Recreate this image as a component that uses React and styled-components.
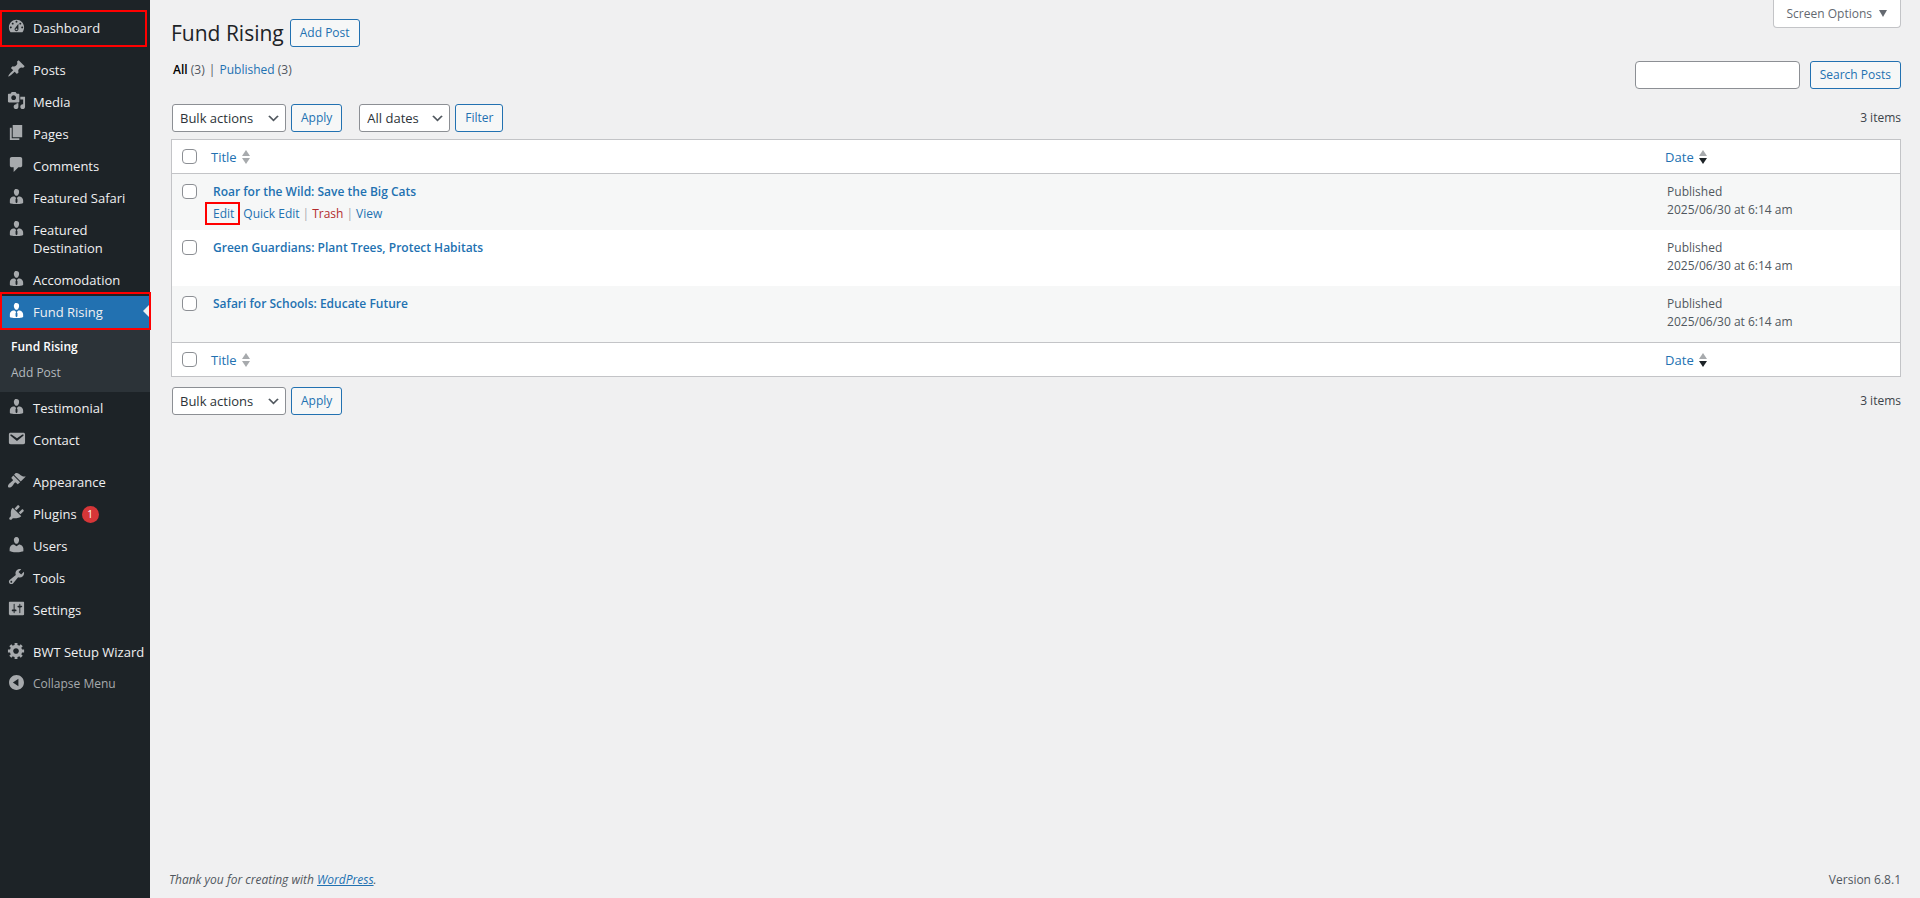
import React from 'react';
import styled, { createGlobalStyle, css } from 'styled-components';

const GlobalStyle = createGlobalStyle`
  * {
    box-sizing: border-box;
  }
  body {
    margin: 0;
    background: #f0f0f1;
    color: #3c434a;
    font-family: 'Segoe UI', 'Open Sans', 'Noto Sans', sans-serif;
    font-size: 12px;
    line-height: 18px;
  }
  a {
    color: #2271b1;
    text-decoration: none;
  }
  button, input, select {
    font-family: inherit;
  }
`;

const businessman =
  'M7.3 6l-.03-.19c-.04-.37-.05-.73-.03-1.08.02-.36.1-.71.25-1.04.14-.32.31-.61.52-.86s.49-.46.83-.6c.34-.15.72-.23 1.13-.23.69 0 1.26.2 1.71.59s.76.87.91 1.44.18 1.16.09 1.78l-.03.19c-.01.09-.05.25-.11.48-.05.24-.12.47-.2.69-.08.21-.19.45-.34.72-.14.27-.3.49-.47.69-.18.19-.4.34-.67.48-.27.13-.55.19-.86.19s-.59-.06-.87-.19c-.26-.13-.49-.29-.67-.5-.18-.2-.34-.42-.49-.66-.15-.25-.26-.49-.34-.73-.09-.25-.16-.47-.21-.67-.06-.21-.1-.37-.12-.5zm9.2 6.24c.41.7.5 1.41.5 2.14v2.49c0 .03-.12.08-.29.13-.18.04-.42.13-.97.27-.55.12-1.1.24-1.65.34s-1.19.19-1.95.27c-.75.08-1.46.12-2.13.12-.68 0-1.39-.04-2.14-.12-.75-.07-1.4-.17-1.98-.27-.58-.11-1.08-.23-1.56-.34-.49-.11-.8-.21-1.06-.29L3 16.87v-2.49c0-.75.07-1.46.46-2.15s.81-1.25 1.5-1.68C5.66 10.12 7.19 10 8 10l1.67 1.67L9 13v3l1.02 1.08L11 16v-3l-.68-1.33L11.97 10c.77 0 2.2.07 2.9.52.71.45 1.21 1.02 1.63 1.72z';

const icons = {
  dashboard:
    'M3.76 16h12.48c1.1-1.37 1.76-3.11 1.76-5 0-4.42-3.58-8-8-8s-8 3.58-8 8c0 1.89.66 3.63 1.76 5zM10 4c.55 0 1 .45 1 1s-.45 1-1 1-1-.45-1-1 .45-1 1-1zM6 6c.55 0 1 .45 1 1s-.45 1-1 1-1-.45-1-1 .45-1 1-1zm8 0c.55 0 1 .45 1 1s-.45 1-1 1-1-.45-1-1 .45-1 1-1zm-5.37 5.55L12 7v6c0 1.1-.9 2-2 2s-2-.9-2-2c0-.57.24-1.08.63-1.45zM4 10c.55 0 1 .45 1 1s-.45 1-1 1-1-.45-1-1 .45-1 1-1zm12 0c.55 0 1 .45 1 1s-.45 1-1 1-1-.45-1-1 .45-1 1-1zm-5 3c0-.55-.45-1-1-1s-1 .45-1 1 .45 1 1 1 1-.45 1-1z',
  post: 'M10.44 3.02l1.82-1.82 6.36 6.35-1.83 1.82c-1.05-.68-2.48-.57-3.41.36l-.75.75c-.92.93-1.04 2.35-.35 3.41l-1.83 1.82-2.41-2.41-2.8 2.79c-.42.42-3.38 2.71-3.8 2.29s1.86-3.39 2.28-3.81l2.79-2.79L4.1 9.36l1.83-1.82c1.05.69 2.48.57 3.4-.36l.75-.75c.93-.92 1.05-2.35.36-3.41z',
  media:
    'M13 11V4c0-.55-.45-1-1-1h-1.67L9 1H5L3.67 3H2c-.55 0-1 .45-1 1v7c0 .55.45 1 1 1h10c.55 0 1-.45 1-1zM7 4.5c1.38 0 2.5 1.12 2.5 2.5S8.38 9.5 7 9.5 4.5 8.38 4.5 7 5.62 4.5 7 4.5zM14 6h5v10.5c0 1.38-1.12 2.5-2.5 2.5S14 17.88 14 16.5s1.12-2.5 2.5-2.5c.17 0 .34.02.5.05V9h-3V6zm-4 8.05V13h2v3.5c0 1.38-1.12 2.5-2.5 2.5S7 17.88 7 16.5 8.12 14 9.5 14c.17 0 .34.02.5.05z',
  page: 'M6 15V2h10v13H6zm-1 1h8v2H3V5h2v11z',
  comments: 'M5 2h9c1.1 0 2 .9 2 2v7c0 1.1-.9 2-2 2h-2l-5 5v-5H5c-1.1 0-2-.9-2-2V4c0-1.1.9-2 2-2z',
  businessman,
  email:
    'M3.87 4h13.25C18.37 4 19 4.59 19 5.79v8.42c0 1.19-.63 1.79-1.88 1.79H3.87c-1.25 0-1.88-.6-1.88-1.79V5.79c0-1.2.63-1.79 1.88-1.79zm6.62 8.6l6.74-5.53c.24-.2.43-.66.13-1.07-.29-.41-.82-.42-1.17-.17l-5.7 3.86L4.8 5.83c-.35-.25-.88-.24-1.17.17-.3.41-.11.87.13 1.07z',
  appearance:
    'M14.48 11.06L7.41 3.99l1.5-1.5c.5-.56 2.3-.47 3.51.32 1.21.8 1.43 1.28 2.91 2.1 1.18.64 2.45 1.26 4.45.85zm-.71.71L6.7 4.7 4.93 6.47c-.39.39-.39 1.02 0 1.41l1.06 1.06c.39.39.39 1.03 0 1.42-.6.6-1.43 1.11-2.21 1.69-.35.26-.7.53-1.01.84C1.43 14.23.4 16.08 1.4 17.07c.99 1 2.84-.03 4.18-1.36.31-.31.58-.66.85-1.02.57-.78 1.08-1.61 1.69-2.21.39-.39 1.02-.39 1.41 0l1.06 1.06c.39.39 1.02.39 1.41 0z',
  plugins:
    'M13.11 4.36L9.87 7.6 8 5.73l3.24-3.24c.35-.34 1.05-.2 1.56.32.52.51.66 1.21.31 1.55zm-8 1.77l.91-1.12 9.01 9.01-1.19.84c-.71.71-2.63 1.16-3.82 1.16H6.14L4.9 17.26c-.59.59-1.54.59-2.12 0-.59-.58-.59-1.53 0-2.12l1.24-1.24v-3.88c0-1.13.4-3.19 1.09-3.89zm7.26 3.97l3.24-3.24c.34-.35 1.04-.21 1.55.31.52.51.66 1.21.31 1.55l-3.24 3.25z',
  users:
    'M10 9.25c-2.27 0-2.73-3.44-2.73-3.44C7 4.02 7.82 2 9.97 2c2.16 0 2.98 2.02 2.71 3.81 0 0-.41 3.44-2.68 3.44zm0 2.57L12.72 10c2.39 0 4.52 2.33 4.52 4.53v2.49s-3.65 1.13-7.24 1.13c-3.65 0-7.24-1.13-7.24-1.13v-2.49c0-2.25 1.94-4.48 4.47-4.48z',
  tools:
    'M16.68 9.77c-1.34 1.34-3.3 1.67-4.95.99l-5.41 6.52c-.99.99-2.59.99-3.58 0s-.99-2.59 0-3.57l6.52-5.42c-.68-1.65-.35-3.61.99-4.95 1.28-1.28 3.12-1.62 4.72-1.06l-2.89 2.89 2.82 2.82 2.86-2.87c.53 1.58.18 3.39-1.08 4.65zM3.81 16.21c.4.39 1.04.39 1.43 0 .4-.4.4-1.04 0-1.43-.39-.4-1.03-.4-1.43 0-.39.39-.39 1.03 0 1.43z',
  settings:
    'M18 16V4c0-.55-.45-1-1-1H3c-.55 0-1 .45-1 1v12c0 .55.45 1 1 1h14c.55 0 1-.45 1-1zM8 11h1c.55 0 1 .45 1 1s-.45 1-1 1H8v1.5c0 .28-.22.5-.5.5s-.5-.22-.5-.5V13H6c-.55 0-1-.45-1-1s.45-1 1-1h1V5.5c0-.28.22-.5.5-.5s.5.22.5.5V11zm5-2h-1c-.55 0-1-.45-1-1s.45-1 1-1h1V5.5c0-.28.22-.5.5-.5s.5.22.5.5V7h1c.55 0 1 .45 1 1s-.45 1-1 1h-1v5.5c0 .28-.22.5-.5.5s-.5-.22-.5-.5V9z',
  generic:
    'M18 12h-2.18c-.17.7-.44 1.35-.81 1.93l1.54 1.54-2.1 2.1-1.54-1.54c-.58.36-1.23.63-1.91.79V19H8v-2.18c-.68-.16-1.33-.43-1.91-.79l-1.54 1.54-2.12-2.12 1.54-1.54c-.36-.58-.63-1.23-.79-1.91H1V9.03h2.17c.16-.7.44-1.35.8-1.94L2.43 5.55l2.1-2.1 1.54 1.54c.58-.37 1.24-.64 1.93-.81V2h3v2.18c.68.16 1.33.43 1.91.79l1.54-1.54 2.12 2.12-1.54 1.54c.36.59.64 1.24.8 1.94H18V12zm-8.5 1.5c1.66 0 3-1.34 3-3s-1.34-3-3-3-3 1.34-3 3 1.34 3 3 3z',
  collapse:
    'M10 2.16c4.33 0 7.84 3.51 7.84 7.84s-3.51 7.84-7.84 7.84S2.16 14.33 2.16 10 5.71 2.16 10 2.16zm2 11.72V6.12L6.18 9.97z'
};

// each group is followed by a blank separator
const menuGroups = [
  [{ icon: 'dashboard', label: 'Dashboard', marked: true }],
  [
    { icon: 'post', label: 'Posts' },
    { icon: 'media', label: 'Media' },
    { icon: 'page', label: 'Pages' },
    { icon: 'comments', label: 'Comments' },
    { icon: 'businessman', label: 'Featured Safari' },
    { icon: 'businessman', label: 'Featured Destination' },
    { icon: 'businessman', label: 'Accomodation' },
    { icon: 'businessman', label: 'Fund Rising', active: true, marked: true, children: ['Fund Rising', 'Add Post'] },
    { icon: 'businessman', label: 'Testimonial' },
    { icon: 'email', label: 'Contact' }
  ],
  [
    { icon: 'appearance', label: 'Appearance' },
    { icon: 'plugins', label: 'Plugins', count: 1 },
    { icon: 'users', label: 'Users' },
    { icon: 'tools', label: 'Tools' },
    { icon: 'settings', label: 'Settings' }
  ],
  [{ icon: 'generic', label: 'BWT Setup Wizard' }]
];

const posts = [
  { id: 1, title: 'Roar for the Wild: Save the Big Cats', date: '2025/06/30 at 6:14 am', showActions: true },
  { id: 2, title: 'Green Guardians: Plant Trees, Protect Habitats', date: '2025/06/30 at 6:14 am' },
  { id: 3, title: 'Safari for Schools: Educate Future', date: '2025/06/30 at 6:14 am' }
];

const MenuItem = ({ item }) => (
  <li>
    <MenuLink href="#" $active={item.active}>
      <MenuIcon viewBox="0 0 20 20" aria-hidden="true">
        <path d={icons[item.icon]} />
      </MenuIcon>
      <MenuLabel>
        {item.label}
        {item.count && <Count>{item.count}</Count>}
      </MenuLabel>
      {item.active && <Arrow />}
      {item.marked && <MenuMark $wide={item.active} />}
    </MenuLink>
    {item.children && (
      <SubMenu>
        {item.children.map((child, idx) => (
          <li key={child}>
            <SubLink href="#" $current={idx === 0}>
              {child}
            </SubLink>
          </li>
        ))}
      </SubMenu>
    )}
  </li>
);

const Select = ({ label, options, wide }) => (
  <SelectWrap $wide={wide}>
    <StyledSelect aria-label={label}>
      {options.map(option => (
        <option key={option}>{option}</option>
      ))}
    </StyledSelect>
    <Chevron viewBox="0 0 20 20" aria-hidden="true">
      <path d="M5 6l5 5 5-5 2 1-7 7-7-7 2-1z" />
    </Chevron>
  </SelectWrap>
);

const SortLink = ({ label, desc }) => (
  <Sort href="#">
    {label}
    <SortIcon viewBox="0 0 8 14" aria-hidden="true">
      <path d="M4 0l4 6H0z" fill="#a7aaad" />
      <path d="M0 8h8l-4 6z" fill={desc ? '#1d2327' : '#a7aaad'} />
    </SortIcon>
  </Sort>
);

const HeadRow = ({ name }) => (
  <tr>
    <CheckHead>
      <Checkbox aria-label={`Select all, ${name}`} />
    </CheckHead>
    <Head scope="col">
      <SortLink label="Title" />
    </Head>
    <DateHead scope="col">
      <SortLink label="Date" desc />
    </DateHead>
  </tr>
);

const BulkActions = () => (
  <Group>
    <Select wide label="Select bulk action" options={['Bulk actions', 'Edit', 'Move to Trash']} />
    <Button type="button">Apply</Button>
  </Group>
);

const App = () => {
  return (
    <>
      <GlobalStyle />
      <Page>
        <Sidebar>
          {menuGroups.map((group, idx) => (
            <Menu key={idx}>
              {group.map(item => (
                <MenuItem key={item.label} item={item} />
              ))}
            </Menu>
          ))}
          <CollapseButton type="button">
            <MenuIcon viewBox="0 0 20 20" aria-hidden="true">
              <path d={icons.collapse} />
            </MenuIcon>
            <CollapseLabel>Collapse Menu</CollapseLabel>
          </CollapseButton>
        </Sidebar>

        <Content>
          <TopBar>
            <Heading>
              <h1>Fund Rising</h1>
              <ButtonLink href="#">Add Post</ButtonLink>
            </Heading>
            <ScreenOptions type="button">
              Screen Options
              <Caret viewBox="0 0 8 7" aria-hidden="true">
                <path d="M0 0h8L4 7z" />
              </Caret>
            </ScreenOptions>
          </TopBar>

          <SearchBar>
            <Views>
              <AllLink href="#">All</AllLink> (3) <Divider>|</Divider> <a href="#">Published</a> (3)
            </Views>
            <SearchForm onSubmit={e => e.preventDefault()}>
              <SearchInput type="search" aria-label="Search Posts" />
              <Button type="submit">Search Posts</Button>
            </SearchForm>
          </SearchBar>

          <TableNav>
            <Filters>
              <BulkActions />
              <Group>
                <Select label="Filter by date" options={['All dates', 'June 2025']} />
                <Button type="button">Filter</Button>
              </Group>
            </Filters>
            <span>3 items</span>
          </TableNav>

          <Table>
            <thead>
              <HeadRow name="top" />
            </thead>
            <tbody>
              {posts.map(post => (
                <Row key={post.id}>
                  <CheckCell>
                    <Checkbox aria-label={`Select ${post.title}`} />
                  </CheckCell>
                  <Cell>
                    <PostTitle href="#">{post.title}</PostTitle>
                    {post.showActions && (
                      <RowActions>
                        <EditLink href="#">Edit</EditLink>
                        <a href="#">Quick Edit</a>
                        <span>|</span>
                        <TrashLink href="#">Trash</TrashLink>
                        <span>|</span>
                        <a href="#">View</a>
                      </RowActions>
                    )}
                  </Cell>
                  <Cell>
                    Published
                    <br />
                    {post.date}
                  </Cell>
                </Row>
              ))}
            </tbody>
            <tfoot>
              <HeadRow name="bottom" />
            </tfoot>
          </Table>

          <BottomNav>
            <BulkActions />
            <span>3 items</span>
          </BottomNav>

          <Footer>
            <em>
              Thank you for creating with <FooterLink href="#">WordPress</FooterLink>.
            </em>
            <span>Version 6.8.1</span>
          </Footer>
        </Content>
      </Page>
    </>
  );
};

const Page = styled.div`
  display: flex;
  min-height: 100vh;
`;

const Sidebar = styled.nav`
  flex: 0 0 150px;
  padding-top: 12px;
  background: #1d2327;
`;

const Menu = styled.ul`
  list-style: none;
  margin: 0 0 10px;
  padding: 0;

  &:last-of-type {
    margin-bottom: 0;
  }
`;

const menuRow = css`
  position: relative;
  display: flex;
  align-items: flex-start;
  gap: 7px;
  padding: 0 0 0 7px;
  font-size: 13px;
  line-height: 18px;
`;

const MenuIcon = styled.svg`
  flex: none;
  width: 19px;
  height: 19px;
  margin-top: 5px;
  fill: #a7aaad;
`;

const MenuLink = styled.a`
  ${menuRow}
  color: #f0f0f1;
  background: ${props => (props.$active ? '#2271b1' : 'none')};

  ${MenuIcon} {
    fill: ${props => (props.$active ? '#ffffff' : '#a7aaad')};
  }
`;

const MenuLabel = styled.span`
  display: flex;
  align-items: center;
  gap: 5px;
  padding: 7px 0;
`;

const CollapseButton = styled.button`
  ${menuRow}
  width: 100%;
  border: 0;
  background: none;
  color: #a7aaad;
  text-align: left;
  cursor: pointer;
`;

const CollapseLabel = styled.span`
  padding: 7px 0;
  font-size: 12px;
`;

const Count = styled.span`
  min-width: 17px;
  height: 17px;
  border-radius: 9px;
  background: #d63638;
  color: #fff;
  font-size: 10px;
  line-height: 17px;
  text-align: center;
`;

const Arrow = styled.span`
  position: absolute;
  right: 0;
  top: 8px;
  border: 7px solid transparent;
  border-left-width: 0;
  border-right-color: #f0f0f1;
`;

const MenuMark = styled.span`
  position: absolute;
  z-index: 1;
  inset: ${props => (props.$wide ? '-4px -1px -2px 0' : '-2px 3px -3px 0')};
  border: 2px solid #ff0000;
`;

const SubMenu = styled.ul`
  list-style: none;
  margin: 0;
  padding: 6px 0;
  background: #2c3338;
`;

const SubLink = styled.a`
  display: block;
  padding: 4px 11px;
  color: ${props => (props.$current ? '#ffffff' : '#b4b9be')};
  font-weight: ${props => (props.$current ? 600 : 400)};
`;

const Content = styled.main`
  flex: 1;
  min-width: 0;
  display: flex;
  flex-direction: column;
  padding: 0 19px 9px 21px;
`;

const TopBar = styled.header`
  display: flex;
  justify-content: space-between;
  align-items: flex-start;
`;

const Heading = styled.div`
  display: flex;
  align-items: center;
  gap: 6px;
  padding-top: 19px;

  h1 {
    margin: 0;
    color: #1d2327;
    font-size: 21px;
    font-weight: 400;
    line-height: 28px;
  }
`;

const button = css`
  height: 28px;
  padding: 0 9px;
  border: 1px solid #2271b1;
  border-radius: 3px;
  background: #f6f7f7;
  color: #2271b1;
  font-size: 12px;
  line-height: 26px;
  white-space: nowrap;
  cursor: pointer;
`;

const Button = styled.button`
  ${button}
`;

const ButtonLink = styled.a`
  ${button}
`;

const ScreenOptions = styled.button`
  display: flex;
  align-items: center;
  gap: 7px;
  height: 28px;
  padding: 0 13px;
  border: 1px solid #c3c4c7;
  border-top: 0;
  border-radius: 0 0 4px 4px;
  background: #fff;
  color: #646970;
  font-size: 12px;
  cursor: pointer;
`;

const Caret = styled.svg`
  width: 8px;
  height: 7px;
  fill: #646970;
`;

const SearchBar = styled.div`
  display: flex;
  justify-content: space-between;
  align-items: flex-start;
  margin-top: 14px;
`;

const Views = styled.div`
  padding-left: 2px;
  color: #50575e;
`;

const AllLink = styled.a`
  color: #000;
  font-weight: 600;
`;

const Divider = styled.span`
  padding: 0 1px;
`;

const SearchForm = styled.form`
  display: flex;
  gap: 10px;
`;

const SearchInput = styled.input`
  width: 165px;
  height: 28px;
  padding: 0 7px;
  border: 1px solid #8c8f94;
  border-radius: 4px;
  background: #fff;
  font-size: 13px;
`;

const TableNav = styled.div`
  display: flex;
  justify-content: space-between;
  align-items: center;
  margin: 15px 0 7px;
  padding-left: 1px;
`;

const BottomNav = styled(TableNav)`
  margin: 10px 0 0;
`;

const Filters = styled.div`
  display: flex;
  gap: 17px;
`;

const Group = styled.div`
  display: flex;
  gap: 5px;
`;

const SelectWrap = styled.div`
  position: relative;
  width: ${props => (props.$wide ? '114px' : '91px')};
`;

const StyledSelect = styled.select`
  appearance: none;
  width: 100%;
  height: 28px;
  padding: 0 22px 0 7px;
  border: 1px solid #8c8f94;
  border-radius: 3px;
  background: #fff;
  color: #2c3338;
  font-size: 13px;
`;

const Chevron = styled.svg`
  position: absolute;
  top: 7px;
  right: 5px;
  width: 15px;
  height: 15px;
  fill: #50575e;
  pointer-events: none;
`;

const Table = styled.table`
  width: 100%;
  border: 1px solid #c3c4c7;
  border-spacing: 0;
  background: #fff;
  table-layout: fixed;

  thead th {
    border-bottom: 1px solid #c3c4c7;
  }
  tfoot th {
    border-top: 1px solid #c3c4c7;
  }
`;

const Head = styled.th`
  height: 34px;
  padding: 0 7px;
  font-size: 13px;
  font-weight: 400;
  text-align: left;
`;

const CheckHead = styled(Head)`
  width: 32px;
  padding: 0 0 0 10px;
`;

const DateHead = styled(Head)`
  width: 14%;
`;

const Sort = styled.a`
  display: flex;
  align-items: center;
  gap: 5px;
`;

const SortIcon = styled.svg`
  width: 8px;
  height: 14px;
`;

const Row = styled.tr`
  &:nth-child(odd) {
    background: #f6f7f7;
  }
`;

const Cell = styled.td`
  height: 56px;
  padding: 9px 9px 7px;
  color: #50575e;
  vertical-align: top;
`;

const CheckCell = styled(Cell)`
  padding: 10px 0 0 10px;
`;

const Checkbox = styled.input.attrs({ type: 'checkbox' })`
  appearance: none;
  display: block;
  width: 15px;
  height: 15px;
  margin: 0;
  border: 1px solid #8c8f94;
  border-radius: 4px;
  background: #fff;
`;

const PostTitle = styled.a`
  font-size: 12px;
  font-weight: 600;
`;

const RowActions = styled.div`
  display: flex;
  gap: 3px;
  margin-top: 4px;
  color: #a7aaad;
`;

const EditLink = styled.a`
  position: relative;
  margin-right: 6px;

  &::after {
    content: '';
    position: absolute;
    inset: -3px -6px -2px -8px;
    border: 2px solid #ff0000;
  }
`;

const TrashLink = styled.a`
  color: #b32d2e;
`;

const Footer = styled.footer`
  display: flex;
  justify-content: space-between;
  margin-top: auto;
  margin-left: -2px;
  padding-top: 20px;
  color: #50575e;
`;

const FooterLink = styled.a`
  text-decoration: underline;
`;

export default App;
